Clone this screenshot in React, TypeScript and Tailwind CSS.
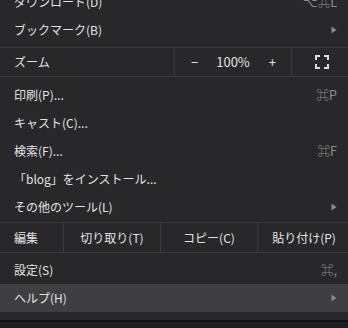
import React from "react";

const font = { fontFamily: '"Noto Sans CJK JP", "DejaVu Sans", sans-serif' };

function Arrow() {
  return (
    <svg width="6" height="8" viewBox="0 0 6 8" className="text-[#8a8a8c]">
      <path d="M0.5 0.5 L5.5 4 L0.5 7.5 Z" fill="currentColor" />
    </svg>
  );
}

function FullscreenIcon() {
  return (
    <svg width="14" height="14" viewBox="0 0 14 14" fill="none" stroke="#dedede" strokeWidth="2">
      <path d="M1 5V1H5" />
      <path d="M9 1H13V5" />
      <path d="M13 9V13H9" />
      <path d="M5 13H1V9" />
    </svg>
  );
}

interface RowProps {
  label: string;
  shortcut?: string;
  submenu?: boolean;
  active?: boolean;
}

function Row({ label, shortcut, submenu, active }: RowProps) {
  return (
    <div
      className={
        "h-[28px] flex items-center justify-between pl-[14px] pr-[11px] " +
        (active ? "bg-[#3f3f42]" : "")
      }
    >
      <span className="text-[12px] text-[#e2e2e2]">{label}</span>
      {shortcut && <span className="text-[12.5px] text-[#8e8e90]">{shortcut}</span>}
      {submenu && <Arrow />}
    </div>
  );
}

function Line() {
  return <div className="h-px bg-[#3a3a3c]" />;
}

export default function App() {
  return (
    <div className="w-[348px] h-[328px] overflow-hidden bg-[#1e1e20]" style={font}>
      <div className="-mt-[12px] bg-[#28282a] pb-[8px] border-b-2 border-[#0f0f10]">
        <Row label="ダウンロード(D)" shortcut="⌥⌘L" />
        <Row label="ブックマーク(B)" submenu />

        <div className="mt-[3px]">
          <Line />
          <div className="h-[28px] flex items-center">
            <span className="w-[174px] pl-[14px] text-[12px] text-[#e2e2e2]">ズーム</span>
            <div className="w-[118px] h-full border-l border-r border-[#3a3a3c] flex items-center text-[13px] text-[#e2e2e2]">
              <span className="w-[38px] text-center pl-[2px]">−</span>
              <span className="w-[42px] text-center">100%</span>
              <span className="w-[38px] text-center">+</span>
            </div>
            <div className="flex-1 flex items-center justify-center pl-[4px]">
              <FullscreenIcon />
            </div>
          </div>
          <Line />
        </div>

        <div className="mt-[4px]">
          <Row label="印刷(P)..." shortcut="⌘P" />
          <Row label="キャスト(C)..." />
          <Row label="検索(F)..." shortcut="⌘F" />
          <Row label="「blog」をインストール..." />
          <Row label="その他のツール(L)" submenu />
        </div>

        <div className="mt-[1px]">
          <Line />
          <div className="h-[29px] flex items-center text-[12px] text-[#e2e2e2]">
            <span className="w-[63px] pl-[14px]">編集</span>
            <span className="w-[97px] h-full flex items-center justify-center border-l border-[#3a3a3c]">
              切り取り(T)
            </span>
            <span className="w-[97px] h-full flex items-center justify-center border-l border-[#3a3a3c]">
              コピー(C)
            </span>
            <span className="flex-1 h-full flex items-center justify-center border-l border-[#3a3a3c] pl-[2px]">
              貼り付け(P)
            </span>
          </div>
          <Line />
        </div>

        <div className="mt-[3px]">
          <Row label="設定(S)" shortcut="⌘," />
          <Row label="ヘルプ(H)" submenu active />
        </div>
      </div>
    </div>
  );
}
